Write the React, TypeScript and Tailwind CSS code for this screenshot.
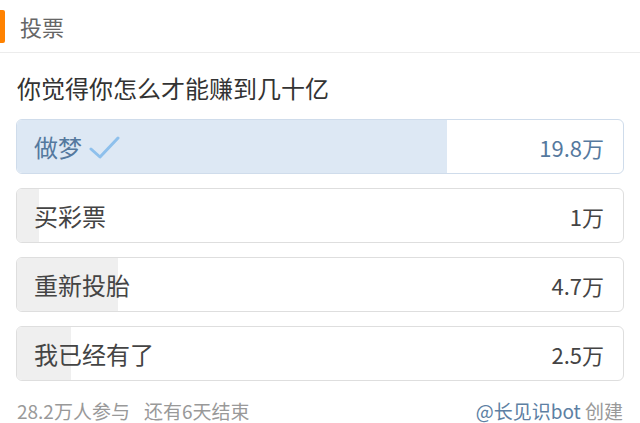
import React from "react";

const options = [
  { label: "做梦", value: "19.8万", pct: 70.9, selected: true },
  { label: "买彩票", value: "1万", pct: 3.6, selected: false },
  { label: "重新投胎", value: "4.7万", pct: 16.7, selected: false },
  { label: "我已经有了", value: "2.5万", pct: 8.9, selected: false },
];

export default function App() {
  return (
    <div
      className="w-[640px] h-[423px] bg-white flex flex-col"
      style={{ fontFamily: '"Noto Sans CJK SC", "Noto Sans", sans-serif' }}
    >
      <div className="h-[53px] flex items-center border-b border-[#ececec] shrink-0">
        <div className="w-[5px] h-[33px] bg-[#ff8200] rounded-r-[2px]" />
        <div className="ml-[15px] text-[22px] leading-[30px] text-[#666]">投票</div>
      </div>
      <div className="mt-[19px] px-[17px] text-[24px] leading-[32px] text-[#333]">
        你觉得你怎么才能赚到几十亿
      </div>
      <div className="mt-[15px] mx-4 flex flex-col gap-[14px]">
        {options.map((o) => (
          <div
            key={o.label}
            className={`relative h-[55px] rounded-[6px] border overflow-hidden flex items-center justify-between pl-[17px] pr-[19px] ${
              o.selected ? "border-[#cfdceb]" : "border-[#dedede]"
            }`}
          >
            <div
              className={`absolute left-0 top-0 bottom-0 ${o.selected ? "bg-[#dde8f4]" : "bg-[#efefef]"}`}
              style={{ width: `${o.pct}%` }}
            />
            <div
              className={`relative flex items-center text-[24px] leading-[32px] ${
                o.selected ? "text-[#55799e]" : "text-[#444]"
              }`}
            >
              {o.label}
              {o.selected && (
                <svg width="32" height="24" viewBox="0 0 32 24" className="ml-[7px] mt-[2px]">
                  <path
                    d="M2 13 L11 21 L29 2"
                    fill="none"
                    stroke="#8ec0ec"
                    strokeWidth="3"
                    strokeLinecap="round"
                    strokeLinejoin="round"
                  />
                </svg>
              )}
            </div>
            <div
              className={`relative text-[22px] leading-[30px] ${
                o.selected ? "text-[#55799e]" : "text-[#444]"
              }`}
            >
              {o.value}
            </div>
          </div>
        ))}
      </div>
      <div className="mt-[18px] px-[17px] flex items-center justify-between text-[19px] leading-[24px]">
        <div className="text-[#999]">
          28.2万人参与<span className="ml-[14px]">还有6天结束</span>
        </div>
        <div className="text-[#999]">
          <span className="text-[#5d7fa3]">@长见识bot</span> 创建
        </div>
      </div>
    </div>
  );
}
